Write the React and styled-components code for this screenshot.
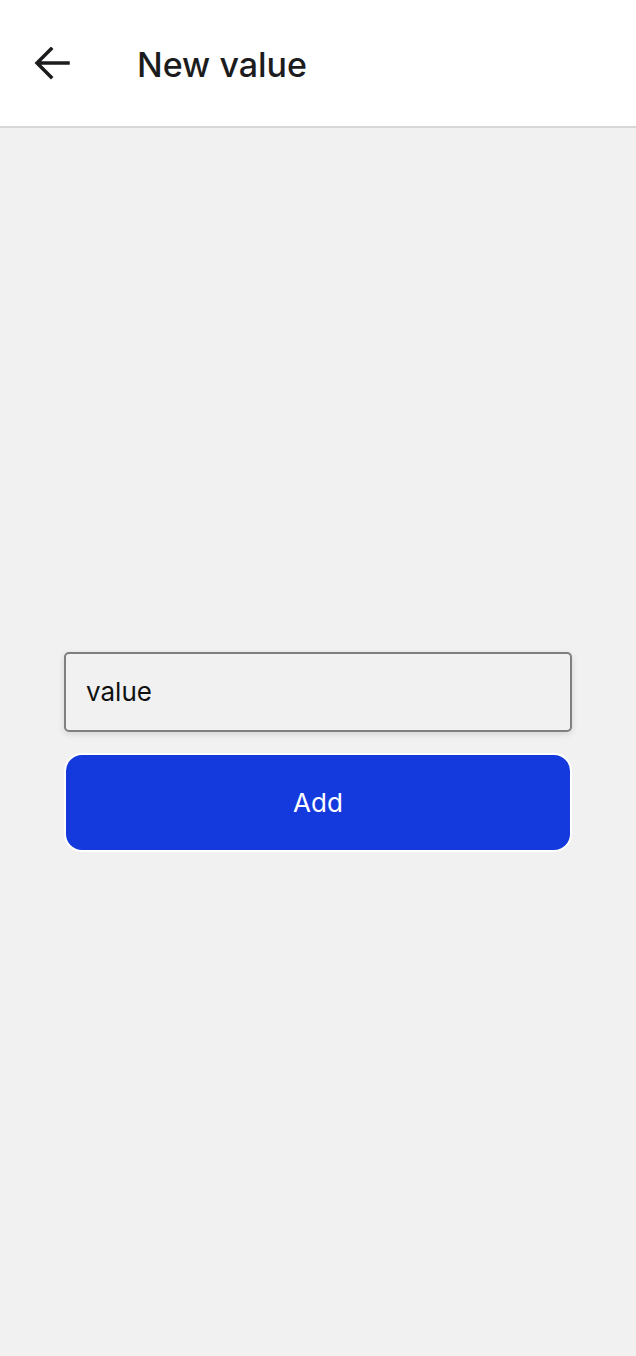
import styled, { createGlobalStyle } from 'styled-components';

const GlobalStyle = createGlobalStyle`
  html, body {
    margin: 0;
    padding: 0;
    background: #f1f1f2;
    font-family: Inter, "Noto Sans", sans-serif;
  }
`

const Page = styled.div`
  min-height: 1356px;
  display: flex;
  flex-direction: column;
  background: #f1f1f2;
`

const Header = styled.header`
  height: 128px;
  background: #ffffff;
  border-bottom: 2px solid #d7d7d7;
  display: flex;
  align-items: center;
  box-sizing: border-box;
  padding: 0 0 0 28px;
  flex-shrink: 0;
`

const BackButton = styled.button`
  width: 48px;
  height: 48px;
  border: none;
  background: none;
  padding: 0;
  display: flex;
  align-items: center;
  justify-content: center;
  cursor: pointer;
  color: #1c1c1e;
  margin-top: 4px;
`

const Title = styled.h1`
  margin: 2px 0 0 61px;
  font-size: 34px;
  font-weight: 500;
  color: #1c1c1e;
  letter-spacing: 0;
`

const Content = styled.main`
  flex: 1;
  display: flex;
  flex-direction: column;
  align-items: center;
  justify-content: center;
  padding-top: 19px;
`

const Form = styled.form`
  width: 508px;
  display: flex;
  flex-direction: column;
  gap: 21px;
`

const Input = styled.input`
  box-sizing: border-box;
  width: 100%;
  height: 80px;
  border: 2px solid #7f7f7f;
  border-radius: 5px;
  background: #f1f1f2;
  padding: 0 20px;
  font-family: Inter, "Noto Sans", sans-serif;
  font-size: 26px;
  color: #111;
  box-shadow: 0 2px 6px rgba(0, 0, 0, 0.12);
  outline: none;
`

const AddButton = styled.button`
  box-sizing: border-box;
  width: 100%;
  height: 99px;
  border: 2px solid #ffffff;
  border-radius: 18px;
  background: #143ade;
  color: #ffffff;
  font-family: Inter, "Noto Sans", sans-serif;
  font-size: 26px;
  font-weight: 400;
  cursor: pointer;
`

function ArrowBack() {
  return (
    <svg width="36" height="36" viewBox="0 0 36 36" fill="none">
      <path d="M34 16H4M17 2L3 16l14 14" stroke="currentColor" strokeWidth="3.5" strokeLinecap="square" />
    </svg>
  );
}

function App() {
  return (
    <Page>
      <GlobalStyle />
      <Header>
        <BackButton aria-label="Back"><ArrowBack /></BackButton>
        <Title>New value</Title>
      </Header>
      <Content>
        <Form onSubmit={(e) => e.preventDefault()}>
          <Input defaultValue="value" />
          <AddButton type="submit">Add</AddButton>
        </Form>
      </Content>
    </Page>
  );
}

export default App;
